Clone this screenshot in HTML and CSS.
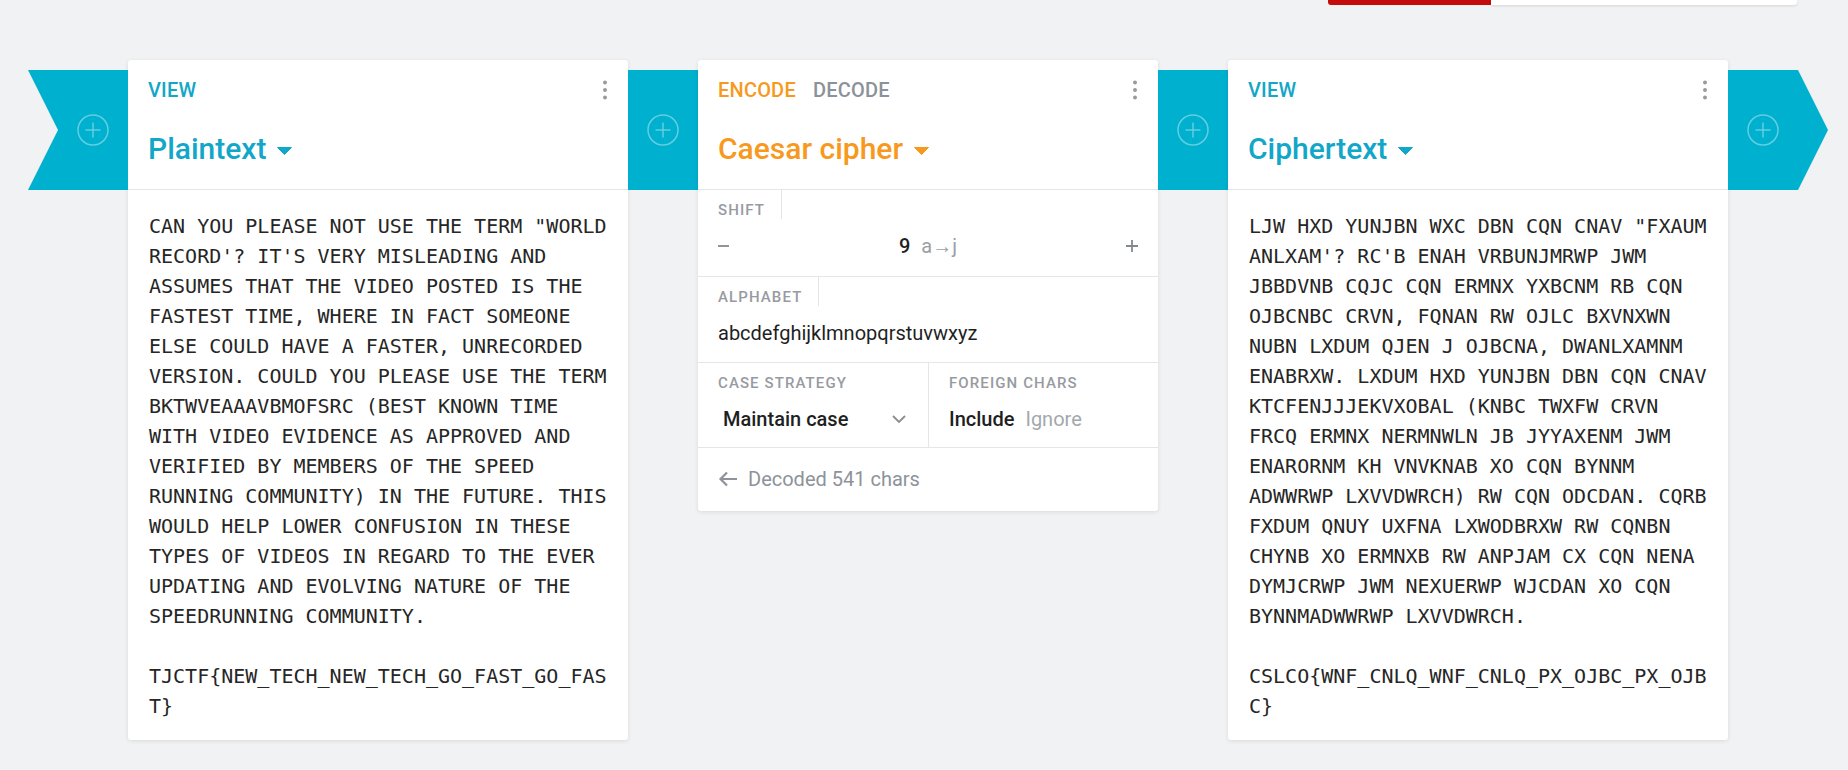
FILE: index.html
```html
<!DOCTYPE html>
<html lang="en">
<head>
<meta charset="utf-8">
<title>Caesar cipher</title>
<link rel="stylesheet" href="styles.css">
</head>
<body>
<div class="topbar"><div class="tb-red"></div><div class="tb-white"></div></div>
<main class="recipe">
  <div class="ribbon ribbon-start">
    <svg class="add" viewBox="0 0 32 32" width="32" height="32"><circle cx="16" cy="16" r="15" /><path d="M16 8.5v15M8.5 16h15" /></svg>
  </div>

  <section class="card card-wide">
    <header class="card-head">
      <div class="head-top">
        <span class="kind kind-view">VIEW</span>
        <svg class="more" viewBox="0 0 6 20" width="6" height="20"><circle cx="3" cy="2.5" r="2"/><circle cx="3" cy="10" r="2"/><circle cx="3" cy="17.5" r="2"/></svg>
      </div>
      <div class="title title-view">Plaintext<svg class="caret" viewBox="0 0 15 8" width="15" height="8"><path d="M0.5 0.5h14l-7 7z"/></svg></div>
    </header>
    <div class="text-out">CAN YOU PLEASE NOT USE THE TERM "WORLD RECORD'? IT'S VERY MISLEADING AND ASSUMES THAT THE VIDEO POSTED IS THE FASTEST TIME, WHERE IN FACT SOMEONE ELSE COULD HAVE A FASTER, UNRECORDED VERSION. COULD YOU PLEASE USE THE TERM BKTWVEAAAVBMOFSRC (BEST KNOWN TIME WITH VIDEO EVIDENCE AS APPROVED AND VERIFIED BY MEMBERS OF THE SPEED RUNNING COMMUNITY) IN THE FUTURE. THIS WOULD HELP LOWER CONFUSION IN THESE TYPES OF VIDEOS IN REGARD TO THE EVER UPDATING AND EVOLVING NATURE OF THE SPEEDRUNNING COMMUNITY.

TJCTF{NEW_TECH_NEW_TECH_GO_FAST_GO_FAST}</div>
  </section>

  <div class="ribbon">
    <svg class="add" viewBox="0 0 32 32" width="32" height="32"><circle cx="16" cy="16" r="15" /><path d="M16 8.5v15M8.5 16h15" /></svg>
  </div>

  <section class="card card-op">
    <header class="card-head">
      <div class="head-top">
        <div class="tabs"><span class="kind kind-on">ENCODE</span><span class="kind kind-off">DECODE</span></div>
        <svg class="more" viewBox="0 0 6 20" width="6" height="20"><circle cx="3" cy="2.5" r="2"/><circle cx="3" cy="10" r="2"/><circle cx="3" cy="17.5" r="2"/></svg>
      </div>
      <div class="title title-op">Caesar cipher<svg class="caret" viewBox="0 0 15 8" width="15" height="8"><path d="M0.5 0.5h14l-7 7z"/></svg></div>
    </header>

    <div class="field">
      <div class="field-label notched">SHIFT</div>
      <div class="stepper">
        <svg class="step" viewBox="0 0 12 12" width="12" height="12"><path d="M0 6h11"/></svg>
        <div class="shift-val"><span class="num">9</span><span class="map">a→j</span></div>
        <svg class="step" viewBox="0 0 12 12" width="12" height="12"><path d="M0 6h12M6 0v12"/></svg>
      </div>
    </div>

    <div class="field field-alpha">
      <div class="field-label notched">ALPHABET</div>
      <div class="field-value">abcdefghijklmnopqrstuvwxyz</div>
    </div>

    <div class="field-pair">
      <div class="field field-half">
        <div class="field-label">CASE STRATEGY</div>
        <div class="select">
          <span class="select-text">Maintain case</span>
          <svg class="chev" viewBox="0 0 14 9" width="14" height="9"><path d="M1 1l6 6 6-6"/></svg>
        </div>
      </div>
      <div class="field field-half">
        <div class="field-label">FOREIGN CHARS</div>
        <div class="toggle"><span class="opt-on">Include</span><span class="opt-off">Ignore</span></div>
      </div>
    </div>

    <div class="status">
      <svg class="back" viewBox="0 0 20 20" width="20" height="20"><path d="M19 10H2.5M9 3.5L2.5 10 9 16.5"/></svg>
      <span>Decoded 541 chars</span>
    </div>
  </section>

  <div class="ribbon">
    <svg class="add" viewBox="0 0 32 32" width="32" height="32"><circle cx="16" cy="16" r="15" /><path d="M16 8.5v15M8.5 16h15" /></svg>
  </div>

  <section class="card card-wide">
    <header class="card-head">
      <div class="head-top">
        <span class="kind kind-view">VIEW</span>
        <svg class="more" viewBox="0 0 6 20" width="6" height="20"><circle cx="3" cy="2.5" r="2"/><circle cx="3" cy="10" r="2"/><circle cx="3" cy="17.5" r="2"/></svg>
      </div>
      <div class="title title-view">Ciphertext<svg class="caret" viewBox="0 0 15 8" width="15" height="8"><path d="M0.5 0.5h14l-7 7z"/></svg></div>
    </header>
    <div class="text-out">LJW HXD YUNJBN WXC DBN CQN CNAV "FXAUM ANLXAM'? RC'B ENAH VRBUNJMRWP JWM JBBDVNB CQJC CQN ERMNX YXBCNM RB CQN OJBCNBC CRVN, FQNAN RW OJLC BXVNXWN NUBN LXDUM QJEN J OJBCNA, DWANLXAMNM ENABRXW. LXDUM HXD YUNJBN DBN CQN CNAV KTCFENJJJEKVXOBAL (KNBC TWXFW CRVN FRCQ ERMNX NERMNWLN JB JYYAXENM JWM ENARORNM KH VNVKNAB XO CQN BYNNM ADWWRWP LXVVDWRCH) RW CQN ODCDAN. CQRB FXDUM QNUY UXFNA LXWODBRXW RW CQNBN CHYNB XO ERMNXB RW ANPJAM CX CQN NENA DYMJCRWP JWM NEXUERWP WJCDAN XO CQN BYNNMADWWRWP LXVVDWRCH.

CSLCO{WNF_CNLQ_WNF_CNLQ_PX_OJBC_PX_OJBC}</div>
  </section>

  <div class="ribbon ribbon-end">
    <svg class="add" viewBox="0 0 32 32" width="32" height="32"><circle cx="16" cy="16" r="15" /><path d="M16 8.5v15M8.5 16h15" /></svg>
  </div>
</main>
</body>
</html>
```

FILE: styles.css
```css
html, body {
  margin: 0;
  padding: 0;
}

body {
  background: #f1f2f4;
  font-family: Roboto, "Liberation Sans", Arial, sans-serif;
  color: #222;
  height: 770px;
  overflow: hidden;
}

/* top (partially hidden) toolbar */
.topbar {
  display: flex;
  justify-content: flex-end;
  padding-right: 51px;
  height: 5px;
}

.tb-red {
  width: 163px;
  background: #c40c0c;
  border-bottom-left-radius: 3px;
}

.tb-white {
  width: 306px;
  background: #fff;
  border-bottom-right-radius: 3px;
  box-shadow: 0 1px 3px rgba(0, 0, 0, 0.12);
}

/* recipe strip */
.recipe {
  display: flex;
  align-items: flex-start;
  margin-top: 55px;
  padding-left: 28px;
}

.ribbon {
  flex: none;
  width: 70px;
  height: 120px;
  margin-top: 10px;
  background: #00b0cf;
  display: flex;
  align-items: center;
  justify-content: center;
  box-sizing: border-box;
}

.ribbon-start {
  width: 100px;
  padding-left: 30px;
  clip-path: polygon(0 0, 100% 0, 100% 100%, 0 100%, 30px 50%);
}

.ribbon-end {
  width: 100px;
  padding-right: 30px;
  clip-path: polygon(0 0, 70px 0, 100% 50%, 70px 100%, 0 100%);
}

.add {
  display: block;
  fill: none;
  stroke: rgba(255, 255, 255, 0.38);
  stroke-width: 1.5;
}

/* cards */
.card {
  flex: none;
  background: #fff;
  border-radius: 3px;
  box-shadow: 0 1px 4px rgba(0, 0, 0, 0.1);
}

.card-wide {
  width: 500px;
}

.card-op {
  width: 460px;
}

.card-head {
  box-sizing: border-box;
  height: 130px;
  padding: 18px 20px 0 20px;
  border-bottom: 1px solid #e5e6e8;
}

.head-top {
  display: flex;
  align-items: center;
  justify-content: space-between;
  height: 24px;
}

.tabs {
  display: flex;
  gap: 17px;
}

.kind {
  font-size: 20px;
  line-height: 24px;
  font-weight: 500;
  letter-spacing: 0.2px;
}

.kind-view {
  color: #12a7c8;
}

.kind-on {
  color: #f7991c;
}

.kind-off {
  color: #8b9299;
}

.more {
  display: block;
  fill: #9a9a9a;
}

.title {
  margin-top: 29px;
  font-size: 30px;
  line-height: 36px;
  font-weight: 500;
}

.title-view {
  color: #12a7c8;
}

.title-op {
  color: #f7991c;
}

.caret {
  margin-left: 11px;
  vertical-align: middle;
  fill: currentColor;
  stroke: currentColor;
  stroke-width: 1;
  stroke-linejoin: round;
}

/* text output */
.text-out {
  padding: 21px 20px 19px 21px;
  font-family: "DejaVu Sans Mono", "Liberation Mono", monospace;
  font-size: 20px;
  line-height: 30px;
  color: #262626;
  white-space: pre-wrap;
  overflow-wrap: break-word;
}

/* operation fields */
.field {
  display: flex;
  flex-direction: column;
  align-items: flex-start;
  padding: 0 20px 18px 20px;
  border-bottom: 1px solid #e5e6e8;
}

.field-alpha {
  padding-bottom: 17px;
}

.field-label {
  padding-top: 11px;
  font-size: 15px;
  line-height: 18px;
  font-weight: 500;
  letter-spacing: 1.1px;
  color: #979ba1;
}

.notched {
  padding-right: 16px;
  border-right: 1px solid #e3e4e6;
}

.stepper {
  align-self: stretch;
  margin-top: 15px;
  height: 24px;
  display: flex;
  align-items: center;
  justify-content: space-between;
}

.step {
  display: block;
  fill: none;
  stroke: #85898e;
  stroke-width: 1.8;
}

.shift-val {
  display: flex;
  align-items: baseline;
  gap: 11px;
  font-size: 20px;
  line-height: 24px;
}

.num {
  font-weight: 500;
  color: #1f1f1f;
}

.map {
  color: #9a9fa5;
}

.field-value {
  margin-top: 15px;
  font-size: 20px;
  line-height: 24px;
  font-weight: 400;
  color: #1f1f1f;
}

.field-pair {
  display: grid;
  grid-template-columns: 231px 1fr;
  border-bottom: 1px solid #e5e6e8;
}

.field-half {
  border-bottom: none;
  padding-bottom: 16px;
}

.field-half:first-child {
  border-right: 1px solid #e5e6e8;
}

.select {
  align-self: stretch;
  margin-top: 15px;
  display: flex;
  align-items: center;
  height: 24px;
  padding-left: 5px;
  padding-right: 2px;
}

.select-text {
  font-size: 20px;
  line-height: 24px;
  font-weight: 500;
  color: #1f1f1f;
}

.chev {
  margin-left: auto;
  fill: none;
  stroke: #8a8d91;
  stroke-width: 1.8;
}

.toggle {
  margin-top: 15px;
  display: flex;
  gap: 11px;
  font-size: 20px;
  line-height: 24px;
}

.opt-on {
  font-weight: 500;
  color: #1f1f1f;
}

.opt-off {
  color: #a3a8ad;
}

.status {
  display: flex;
  align-items: center;
  gap: 10px;
  padding: 19px 20px 20px 20px;
  font-size: 20px;
  line-height: 24px;
  color: #8d9399;
}

.back {
  display: block;
  fill: none;
  stroke: #8d9399;
  stroke-width: 2.2;
}
```
